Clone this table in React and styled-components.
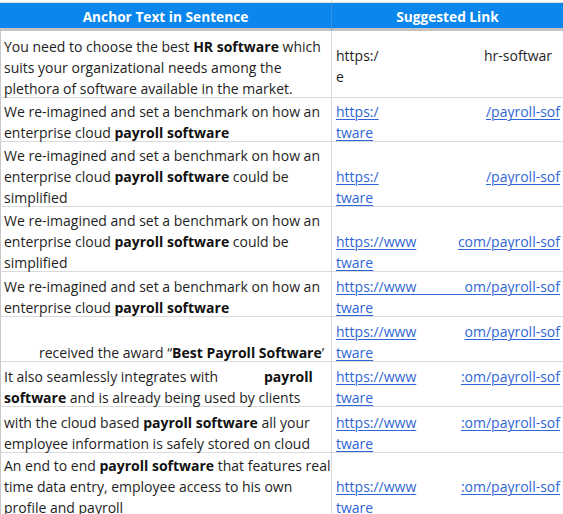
import React from "react";
import styled, { createGlobalStyle } from "styled-components";

const Global = createGlobalStyle`
  html, body { margin: 0; padding: 0; background: #ffffff; }
  body { overflow: hidden; font-family: "Open Sans", "Noto Sans", sans-serif; }
`;

const Sheet = styled.div`
  width: 563px;
  height: 514px;
  overflow: hidden;
  background: #fff;
`;

const TopStrip = styled.div`
  height: 2px;
  display: grid;
  grid-template-columns: 332px 1fr;
  border-bottom: 1px solid #dcdcdc;
  & > div:first-child { border-right: 1px solid #dcdcdc; }
`;

const Grid = styled.div`
  display: grid;
  grid-template-columns: 332px 231px;
`;

const HeadCell = styled.div`
  background: #0a86ec;
  color: #ffffff;
  font-weight: 700;
  font-size: 13.7px;
  display: flex;
  align-items: center;
  justify-content: center;
  padding-top: 1px;
  box-sizing: border-box;
  border-bottom: 3px solid #c4c4c4;
  border-right: ${(p) => (p.$divider ? "1px solid #3f8fd6" : "none")};
  height: 28px;
`;

const Cell = styled.div`
  box-sizing: border-box;
  height: ${(p) => p.$h}px;
  border-bottom: 1px solid #dadada;
  border-left: ${(p) => (p.$first ? "1px solid #c8c8c8" : "none")};
  border-right: ${(p) => (p.$first ? "1px solid #dadada" : "none")};
  padding: 0 3px 0 ${(p) => (p.$first ? 3 : 4)}px;
  display: flex;
  flex-direction: column;
  justify-content: ${(p) => (p.$middle ? "center" : "flex-end")};
  font-size: 14px;
  line-height: 21px;
  color: #1e1e1e;
`;

const Content = styled.div`
  margin-top: ${(p) => (p.$middle ? 2 : 0)}px;
  margin-bottom: -2px;
`;

const TextLine = styled.div`
  white-space: pre;
  padding-left: ${(p) => p.$indent || 0}px;
`;

const LinkLine = styled.div`
  display: flex;
  white-space: pre;
  padding-right: ${(p) => p.$padRight || 0}px;
`;

const Bold = styled.b`
  font-weight: 700;
  color: #111;
`;

const Gap = styled.span`
  display: inline-block;
  width: ${(p) => p.$w}px;
`;

const Link = styled.span`
  color: ${(p) => (p.$plain ? "#1e1e1e" : "#2f66d6")};
  text-decoration: ${(p) => (p.$plain ? "none" : "underline")};
  text-decoration-thickness: 1px;
  text-underline-offset: 2px;
`;

const Filler = styled.span`
  flex: 1;
  background: ${(p) =>
    p.$under
      ? "linear-gradient(#2f66d6, #2f66d6) left bottom 2px / 100% 1px no-repeat"
      : "none"};
`;

const T = (s) => ({ t: s });
const B = (s) => ({ t: s, b: true });
const G = (w) => ({ g: w });

const rows = [
  {
    h: 67,
    left: [
      [T("You need to choose the best "), B("HR software"), T(" which")],
      [T("suits your organizational needs among the")],
      [T("plethora of software available in the market.")],
    ],
    link: { plain: true, middle: true, a: "https:/", b: "hr-softwar", pr: 8, rest: "e" },
  },
  {
    h: 44,
    left: [
      [T("We re-imagined and set a benchmark on how an")],
      [T("enterprise cloud "), B("payroll software")],
    ],
    link: { a: "https:/", b: "/payroll-sof", rest: "tware" },
  },
  {
    h: 65,
    left: [
      [T("We re-imagined and set a benchmark on how an")],
      [T("enterprise cloud "), B("payroll software"), T(" could be")],
      [T("simplified")],
    ],
    link: { a: "https:/", b: "/payroll-sof", rest: "tware" },
  },
  {
    h: 65,
    left: [
      [T("We re-imagined and set a benchmark on how an")],
      [T("enterprise cloud "), B("payroll software"), T(" could be")],
      [T("simplified")],
    ],
    link: { a: "https://www", b: "com/payroll-sof", rest: "tware" },
  },
  {
    h: 45,
    left: [
      [T("We re-imagined and set a benchmark on how an")],
      [T("enterprise cloud "), B("payroll software")],
    ],
    link: { a: "https://www", b: "om/payroll-sof", under: true, rest: "tware" },
  },
  {
    h: 45,
    left: [[T("received the award \u201C"), B("Best Payroll Software"), T("\u2019")]],
    indent: 35,
    link: { a: "https://www", b: "om/payroll-sof", rest: "tware" },
  },
  {
    h: 45,
    left: [
      [T("It also seamlessly integrates with"), G(46), B("payroll")],
      [B("software"), T(" and is already being used by clients")],
    ],
    link: { a: "https://www", b: ":om/payroll-sof", rest: "tware" },
  },
  {
    h: 46,
    left: [
      [T("with the cloud based "), B("payroll software"), T(" all your")],
      [T("employee information is safely stored on cloud")],
    ],
    link: { a: "https://www", b: ":om/payroll-sof", rest: "tware" },
  },
  {
    h: 64,
    left: [
      [T("An end to end "), B("payroll software"), T(" that features real")],
      [T("time data entry, employee access to his own")],
      [T("profile and payroll")],
    ],
    link: { a: "https://www", b: ":om/payroll-sof", rest: "tware" },
  },
];

function Segments({ segs }) {
  return segs.map((s, i) =>
    s.g ? <Gap key={i} $w={s.g} /> : s.b ? <Bold key={i}>{s.t}</Bold> : <span key={i}>{s.t}</span>
  );
}

export default function App() {
  return (
    <Sheet>
      <Global />
      <TopStrip>
        <div />
        <div />
      </TopStrip>
      <Grid>
        <HeadCell $divider>Anchor Text in Sentence</HeadCell>
        <HeadCell>Suggested Link</HeadCell>
        {rows.map((r, i) => (
          <React.Fragment key={i}>
            <Cell $first $h={r.h}>
              <Content>
                {r.left.map((segs, j) => (
                  <TextLine key={j} $indent={r.indent}>
                    <Segments segs={segs} />
                  </TextLine>
                ))}
              </Content>
            </Cell>
            <Cell $h={r.h} $middle={r.link.middle}>
              <Content $middle={r.link.middle}>
                <LinkLine $padRight={r.link.pr}>
                  <Link $plain={r.link.plain}>{r.link.a}</Link>
                  <Filler $under={r.link.under} />
                  <Link $plain={r.link.plain}>{r.link.b}</Link>
                </LinkLine>
                <LinkLine>
                  <Link $plain={r.link.plain}>{r.link.rest}</Link>
                </LinkLine>
              </Content>
            </Cell>
          </React.Fragment>
        ))}
      </Grid>
    </Sheet>
  );
}
